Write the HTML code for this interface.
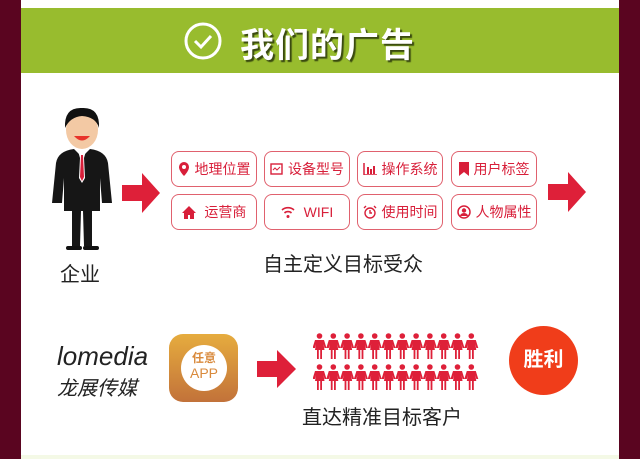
<!DOCTYPE html>
<html><head><meta charset="utf-8"><style>
body{margin:0;width:640px;height:459px;background:#5a0520;position:relative;overflow:hidden;font-family:"Liberation Sans","Noto Sans CJK SC",sans-serif}
.panel{position:absolute;left:21px;top:0;width:598px;height:459px;background:#fff}
.band{position:absolute;left:21px;top:8px;width:598px;height:65px;background:#98bc2e}
.title{position:absolute;left:240px;top:18px;font-size:34px;font-weight:bold;color:#fff;text-shadow:2px 2px 1px #3a4a10;letter-spacing:1px}
.box{position:absolute;width:86px;height:36px;border:1.5px solid #e0616e;border-radius:8px;color:#d81f3a;font-size:14px;display:flex;align-items:center;justify-content:center;gap:5px;box-sizing:border-box}
.box svg{flex:none}
.t{position:absolute;color:#222;font-size:20px}
</style></head><body>
<div class="panel"></div>
<div class="band"></div>
<svg style="position:absolute;left:183px;top:21px" width="40" height="40"><circle cx="20" cy="20" r="17" fill="none" stroke="#fff" stroke-width="3"/><path d="M12 20l6 6 10-11" fill="none" stroke="#fff" stroke-width="3"/></svg>
<div class="title">我们的广告</div>

<svg style="position:absolute;left:52px;top:103px" width="62" height="150" viewBox="0 0 62 150">
<ellipse cx="30" cy="27" rx="16" ry="19" fill="#f3c9a4"/>
<path d="M13 25 Q12 4 30 5 Q48 4 47 25 Q44 14 30 13 Q18 14 13 25Z" fill="#111"/>
<path d="M22 33 Q30 42 38 33Z" fill="#e8332a"/>
<path d="M4 60 Q6 48 22 46 L30 54 L38 46 Q54 48 56 60 L60 100 L50 100 L48 75 L48 108 L40 108 L40 143 L32 143 L31 108 L29 108 L28 143 L20 143 L20 108 L12 108 L12 75 L10 100 L0 100Z" fill="#161616"/>
<path d="M26 48 L34 48 L32 55 L33 75 L30 80 L27 75 L28 55Z" fill="#fff"/>
<path d="M29 52 L31 52 L32 74 L30 78 L28 74Z" fill="#d81f3a"/>
<rect x="14" y="143" width="16" height="4" rx="2" fill="#111"/><rect x="31" y="143" width="16" height="4" rx="2" fill="#111"/>
</svg>
<div class="t" style="left:60px;top:258px">企业</div>

<svg style="position:absolute;left:122px;top:173px" width="40" height="40"><path d="M0 12h20V0l18 20-18 20V28H0Z" fill="#de2039"/></svg>
<svg style="position:absolute;left:548px;top:172px" width="38" height="40"><path d="M0 12h20V0l18 20-18 20V28H0Z" fill="#de2039"/></svg>

<div class="box" style="left:171px;top:151px"><svg width="12" height="14"><path d="M6 0a5 5 0 0 1 5 5c0 4-5 9-5 9s-5-5-5-9a5 5 0 0 1 5-5z" fill="#d81f3a"/><circle cx="6" cy="5" r="2" fill="#fff"/></svg>地理位置</div>
<div class="box" style="left:264px;top:151px"><svg width="13" height="12"><rect x="1" y="1" width="11" height="10" fill="none" stroke="#d81f3a" stroke-width="1.4"/><path d="M3 7l2-2 2 2 3-3" fill="none" stroke="#d81f3a"/></svg>设备型号</div>
<div class="box" style="left:357px;top:151px"><svg width="14" height="12"><path d="M1 0v12h13" fill="none" stroke="#d81f3a" stroke-width="1.5"/><rect x="4" y="4" width="2" height="7" fill="#d81f3a"/><rect x="7" y="6" width="2" height="5" fill="#d81f3a"/><rect x="10" y="3" width="2" height="8" fill="#d81f3a"/></svg>操作系统</div>
<div class="box" style="left:451px;top:151px"><svg width="10" height="14"><path d="M0 0h10v14L5 10 0 14Z" fill="#d81f3a"/></svg>用户标签</div>
<div class="box" style="left:171px;top:194px"><svg width="14" height="13"><path d="M7 0L0 7h2v6h4V9h2v4h4V7h2Z" fill="#d81f3a"/></svg>&nbsp;运营商</div>
<div class="box" style="left:264px;top:194px"><svg width="14" height="12"><path d="M1 4a9 9 0 0 1 12 0M3.5 7a5 5 0 0 1 7 0" fill="none" stroke="#d81f3a" stroke-width="1.6"/><circle cx="7" cy="10.5" r="1.5" fill="#d81f3a"/></svg>&nbsp;WIFI</div>
<div class="box" style="left:357px;top:194px"><svg width="14" height="14"><circle cx="7" cy="8" r="5" fill="none" stroke="#d81f3a" stroke-width="1.4"/><path d="M7 5v3h2M1 3l2-2M13 3l-2-2" fill="none" stroke="#d81f3a" stroke-width="1.4"/></svg>使用时间</div>
<div class="box" style="left:451px;top:194px"><svg width="14" height="14"><circle cx="7" cy="7" r="6" fill="none" stroke="#d81f3a" stroke-width="1.5"/><circle cx="7" cy="5.5" r="2.2" fill="#d81f3a"/><path d="M3 11a4 3 0 0 1 8 0" fill="#d81f3a"/></svg>人物属性</div>

<div class="t" style="left:263px;top:248px">自主定义目标受众</div>

<div style="position:absolute;left:57px;top:341px;font-size:26px;font-style:italic;color:#222">lomedia</div>
<div style="position:absolute;left:57px;top:372px;font-size:20px;font-style:italic;color:#222">龙展传媒</div>

<div style="position:absolute;left:169px;top:334px;width:69px;height:68px;border-radius:14px;background:linear-gradient(#e6ac3e,#c2723a)"></div>
<div style="position:absolute;left:181px;top:345px;width:46px;height:46px;border-radius:50%;background:#fff;color:#d98a3c;text-align:center;font-size:12px;line-height:15px;padding-top:6px;box-sizing:border-box"><b>任意</b><br><span style="font-size:14px">APP</span></div>

<svg style="position:absolute;left:257px;top:350px" width="40" height="38"><path d="M0 11h20V0l19 19-19 19V27H0Z" fill="#de2039"/></svg>

<svg style="position:absolute;left:313px;top:333px" width="166" height="60">
<defs><g id="p" fill="#de2039"><circle cx="6.5" cy="3" r="2.8"/><path d="M2 7h9l2.5 8h-2l-1-4 1 6H9v9H7.2v-9H5.8v9H4v-9H2l1-6-1 4H-0.5Z"/></g></defs>
<g id="row"><use href="#p" x="0"/><use href="#p" x="13.8"/><use href="#p" x="27.6"/><use href="#p" x="41.4"/><use href="#p" x="55.2"/><use href="#p" x="69"/><use href="#p" x="82.8"/><use href="#p" x="96.6"/><use href="#p" x="110.4"/><use href="#p" x="124.2"/><use href="#p" x="138"/><use href="#p" x="151.8"/></g>
<use href="#row" y="31"/>
</svg>

<div style="position:absolute;left:509px;top:326px;width:69px;height:69px;border-radius:50%;background:#f03d1a;color:#fff;font-weight:bold;font-size:20px;line-height:69px;text-align:center">胜利</div>

<div class="t" style="left:302px;top:401px">直达精准目标客户</div>
<div style="position:absolute;left:21px;top:455px;width:598px;height:4px;background:#f4f9e6"></div>
</body></html>
